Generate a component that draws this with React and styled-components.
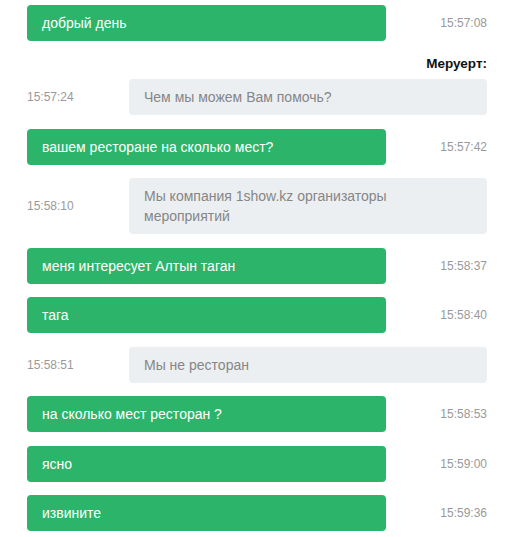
import React from 'react'
import styled, { createGlobalStyle } from 'styled-components'

const Global = createGlobalStyle`
  body {
    margin: 0;
    background: #fff;
    font-family: "Liberation Sans", Arial, sans-serif;
  }
`

const Chat = styled.div`
  display: flex;
  flex-direction: column;
  gap: 13.5px;
  padding: 5px 30px 0 27px;
`

const Row = styled.div`
  display: grid;
  grid-template-columns: ${(p) => (p.$mine ? '359px 1fr' : '102px 1fr')};
  align-items: center;
`

const Group = styled.div`
  display: flex;
  flex-direction: column;
`

const Name = styled.div`
  text-align: right;
  font-size: 13.5px;
  font-weight: 700;
  line-height: 18px;
  color: #111;
  margin-bottom: 6.5px;
`

const Bubble = styled.div`
  padding: 8px 15px;
  border-radius: 4px;
  font-size: 14px;
  line-height: 20px;
  background: ${(p) => (p.$mine ? '#2cb56a' : '#eceff1')};
  color: ${(p) => (p.$mine ? '#fff' : '#868686')};
  padding-right: ${(p) => (p.$mine ? '15px' : '60px')};
`

const Time = styled.div`
  font-size: 12px;
  color: #999;
  text-align: ${(p) => (p.$mine ? 'right' : 'left')};
  grid-row: 1;
  grid-column: ${(p) => (p.$mine ? 2 : 1)};
`

const messages = [
  { mine: true, text: 'добрый день', time: '15:57:08' },
  { mine: false, name: 'Меруерт:', text: 'Чем мы можем Вам помочь?', time: '15:57:24' },
  { mine: true, text: 'вашем ресторане на сколько мест?', time: '15:57:42' },
  { mine: false, text: 'Мы компания 1show.kz организаторы мероприятий', time: '15:58:10' },
  { mine: true, text: 'меня интересует Алтын таган', time: '15:58:37' },
  { mine: true, text: 'тага', time: '15:58:40' },
  { mine: false, text: 'Мы не ресторан', time: '15:58:51' },
  { mine: true, text: 'на сколько мест ресторан ?', time: '15:58:53' },
  { mine: true, text: 'ясно', time: '15:59:00' },
  { mine: true, text: 'извините', time: '15:59:36' },
]

function Message({ mine, text, time }) {
  return (
    <Row $mine={mine}>
      <Bubble $mine={mine} style={{ gridColumn: mine ? 1 : 2, gridRow: 1 }}>
        {text}
      </Bubble>
      <Time $mine={mine}>{time}</Time>
    </Row>
  )
}

export default function App() {
  return (
    <>
      <Global />
      <Chat>
        {messages.map((m, i) =>
          m.name ? (
            <Group key={i}>
              <Name>{m.name}</Name>
              <Message {...m} />
            </Group>
          ) : (
            <Message key={i} {...m} />
          )
        )}
      </Chat>
    </>
  )
}
